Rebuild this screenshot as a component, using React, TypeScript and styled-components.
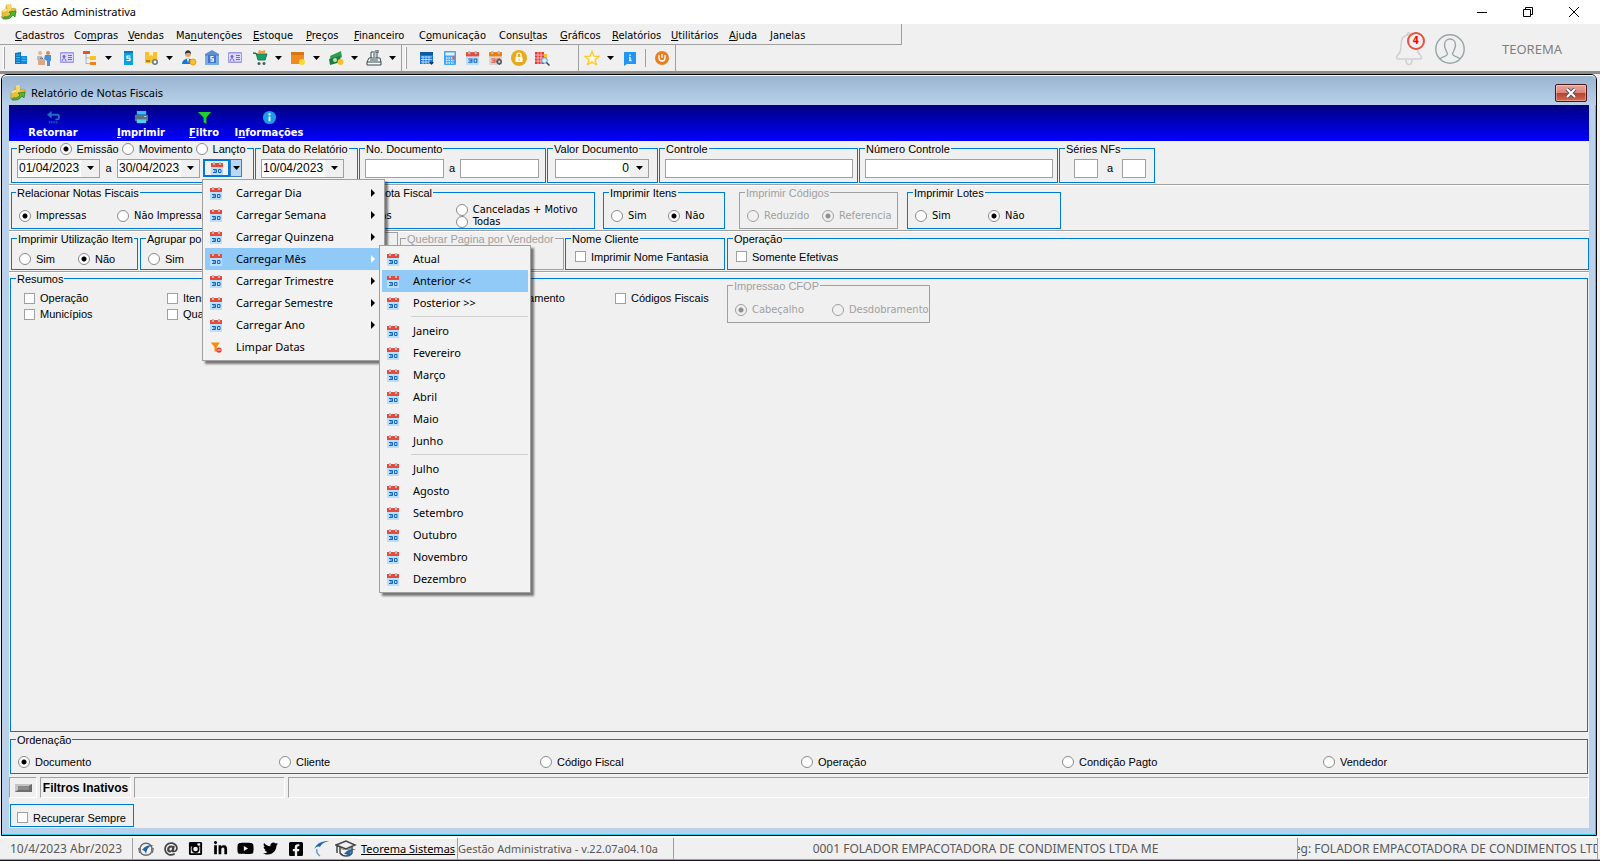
import React from 'react';
import styled, { createGlobalStyle, css } from 'styled-components';
import { FaAt, FaFacebookSquare, FaLinkedinIn, FaTwitter, FaYoutube } from 'react-icons/fa';

const UI = '"Noto Sans", "Open Sans", sans-serif';
const TAHOMA = '"DejaVu Sans Condensed", "DejaVu Sans", sans-serif';
const SYSTEM = '"Liberation Sans", Arial, sans-serif';

const BLUE = '#0078d7';
const GREY = '#a0a0a0';
const FACE = '#f0f0f0';

const GlobalStyle = createGlobalStyle`
  *, *::before, *::after { box-sizing: border-box; }
  body { margin: 0; background: ${FACE}; color: #000; font: 11px/14px ${SYSTEM}; overflow: hidden; }
  button, input { font: inherit; color: inherit; }
  button { background: none; border: 0; padding: 0; margin: 0; }
  svg { display: block; flex: none; }
`;

/* ---------- shell ---------- */

const Shell = styled.div`
  display: flex;
  flex-direction: column;
  min-height: 100vh;
  overflow: hidden;
`;

const TitleBar = styled.header`
  display: flex;
  align-items: center;
  height: 24px;
  padding: 0 3px 0 1px;
  background: #fff;
  font: 11px/16px ${UI};
`;

const TitleText = styled.h1`
  flex: 1;
  margin: 0 0 0 5px;
  font: inherit;
`;

const CaptionButton = styled.button`
  display: flex;
  align-items: center;
  justify-content: center;
  width: 46px;
  height: 20px;
`;

const CommandArea = styled.div`
  display: flex;
  height: 47px;
`;

const CommandBars = styled.div`
  flex: none;
`;

const MenuBar = styled.nav`
  display: flex;
  align-items: center;
  width: 902px;
  height: 21px;
  padding: 3px 0 0 15px;
  border-right: 1px solid ${GREY};
  border-bottom: 1px solid ${GREY};
  font: 11px/16px ${TAHOMA};
`;

const MenuEntry = styled.button<{ $width: number }>`
  width: ${(p) => p.$width}px;
  text-align: left;
  white-space: nowrap;
`;

const ToolBars = styled.div`
  display: flex;
  height: 26px;
`;

const ToolBand = styled.div<{ $width: number; $grip?: boolean }>`
  display: flex;
  align-items: center;
  width: ${(p) => p.$width}px;
  padding-left: ${(p) => (p.$grip ? 5 : 1)}px;
  border-right: 1px solid ${GREY};
`;

const Grip = styled.span`
  width: 2px;
  height: 22px;
  margin: 0 4px 0 -2px;
  background: #fff;
  border-right: 1px solid ${GREY};
`;

const ToolButton = styled.button`
  display: flex;
  align-items: center;
  justify-content: center;
  width: 23px;
  height: 24px;
`;

const ToolArrow = styled.button`
  display: flex;
  align-items: center;
  justify-content: center;
  width: 15px;
  height: 24px;
`;

const ToolDivider = styled.span<{ $visible?: boolean }>`
  width: ${(p) => (p.$visible ? 1 : 2)}px;
  height: 18px;
  background: ${(p) => (p.$visible ? GREY : 'transparent')};
  margin: 0 ${(p) => (p.$visible ? 4 : 0)}px;
`;

const Account = styled.div`
  display: flex;
  flex: 1;
  align-items: center;
  justify-content: flex-end;
  padding: 3px 38px 0 0;
  gap: 10px;
  color: #7f7f7f;
  font: 13px/18px ${UI};
`;

const AlertButton = styled.button`
  position: relative;
  width: 30px;
  height: 34px;
`;

const AlertCount = styled.span`
  position: absolute;
  top: 0;
  right: 0;
  width: 18px;
  height: 18px;
  border: 2px solid #e8503f;
  border-radius: 50%;
  background: ${FACE};
  color: #f00;
  font: bold 10px/14px ${TAHOMA};
  text-align: center;
`;

const AccountName = styled.span`
  margin-left: 27px;
`;

/* ---------- report window ---------- */

const Workspace = styled.main`
  display: flex;
  flex: 1;
  flex-direction: column;
  padding: 0 3px 0 1px;
  border-top: 3px solid #8d8d8d;
  background: ${FACE};
`;

const Window = styled.section`
  display: flex;
  flex: 1;
  flex-direction: column;
  border: 1px solid #000;
  border-radius: 6px 6px 0 0;
  background: #b9d1ea;
  box-shadow: inset -1px -1px 0 #2ad0e8, inset 0 1px 0 #fff;
`;

const WindowTitle = styled.header`
  display: flex;
  align-items: center;
  height: 30px;
  padding: 5px 9px 0 8px;
  border-top: 1px solid #fff;
  border-radius: 5px 5px 0 0;
  background: linear-gradient(#99b4d1, #b9d1ea);
  font: 11px/16px ${UI};
`;

const WindowName = styled.h2`
  flex: 1;
  margin: 0 0 0 5px;
  font: inherit;
`;

const CloseButton = styled.button`
  display: flex;
  align-items: center;
  justify-content: center;
  width: 32px;
  height: 18px;
  border: 1px solid #4a1418;
  border-radius: 2px;
  background: linear-gradient(#e9a69a 0, #dd8478 48%, #b8402a 50%, #cf6d55 100%);
  box-shadow: inset 0 0 0 1px rgba(255, 255, 255, 0.35);
`;

const WindowBody = styled.div`
  display: flex;
  flex: 1;
  flex-direction: column;
  margin: 0 7px 7px 7px;
  background: ${FACE};
`;

const ActionBar = styled.div`
  display: flex;
  height: 36px;
  padding-left: 16px;
  background: linear-gradient(#000080, #0000ff);
  color: #fff;
  font: bold 11px/14px ${TAHOMA};
`;

const Action = styled.button<{ $width: number; $gap: number }>`
  display: flex;
  flex-direction: column;
  align-items: center;
  justify-content: flex-end;
  gap: 1px;
  width: ${(p) => p.$width}px;
  margin-right: ${(p) => p.$gap}px;
  padding-bottom: 1px;
  white-space: nowrap;
`;

const FilterRow = styled.div`
  display: flex;
  gap: 1px;
  padding: 1px 0 1px 2px;
  border-bottom: 1px solid ${GREY};
  box-shadow: 0 1px 0 #fff;
`;

const Group = styled.fieldset<{ $width?: number; $height: number; $top?: number; $left?: number; $gap?: number; $before?: number }>`
  display: flex;
  flex: ${(p) => (p.$width ? 'none' : '1')};
  align-items: center;
  gap: ${(p) => p.$gap ?? 0}px;
  width: ${(p) => (p.$width ? `${p.$width}px` : 'auto')};
  min-width: 0;
  height: ${(p) => p.$height}px;
  margin: 0 0 0 ${(p) => p.$before ?? 0}px;
  padding: ${(p) => p.$top ?? 0}px 0 0 ${(p) => p.$left ?? 5}px;
  border: 1px solid ${BLUE};
  white-space: nowrap;

  &:disabled { border-color: ${GREY}; color: ${GREY}; }
`;

const Legend = styled.legend<{ $indent?: number }>`
  display: flex;
  align-items: center;
  height: 12px;
  margin-left: ${(p) => p.$indent ?? 0}px;
  padding: 2px 1px 0;
  line-height: 12px;
`;

const LegendChoices = styled.span`
  display: flex;
  gap: 3px;
  margin-left: 3px;
`;

const Choice = styled.label<{ $width?: number; $font?: string }>`
  display: flex;
  align-items: center;
  gap: 5px;
  width: ${(p) => (p.$width ? `${p.$width}px` : 'auto')};
  height: 12px;
  line-height: 12px;
  font-family: ${(p) => p.$font ?? 'inherit'};
`;

const Radio = styled.input.attrs({ type: 'radio' })`
  appearance: none;
  flex: none;
  width: 12px;
  height: 12px;
  margin: 0;
  border: 1px solid #8a8a8a;
  border-radius: 50%;
  background: #fff;

  &:checked { background: radial-gradient(circle, #000 0 2px, #fff 3px); }
  &:disabled { border-color: ${GREY}; background: ${FACE}; }
  &:disabled:checked { background: radial-gradient(circle, #8f8f8f 0 2px, ${FACE} 3px); }
`;

const CheckBox = styled.input.attrs({ type: 'checkbox' })`
  appearance: none;
  flex: none;
  width: 11px;
  height: 11px;
  margin: 0;
  border: 1px solid ${GREY};
  background: #fff;
`;

const fieldBox = css`
  height: 19px;
  border: 1px solid ${GREY};
  background: #fff;
`;

const TextField = styled.input.attrs({ type: 'text' })<{ $width: number }>`
  ${fieldBox}
  width: ${(p) => p.$width}px;
  padding: 0 2px;
`;

const ComboField = styled.span<{ $width: number }>`
  ${fieldBox}
  display: flex;
  width: ${(p) => p.$width}px;
  font-size: 12px;
`;

const ComboInput = styled.input.attrs({ type: 'text' })<{ $align?: string }>`
  flex: 1;
  min-width: 0;
  padding: 0 1px;
  border: 0;
  background: none;
  text-align: ${(p) => p.$align ?? 'left'};
`;

const ComboArrow = styled.button`
  display: flex;
  align-items: center;
  justify-content: center;
  width: 18px;
  background: ${FACE};
`;

const To = styled.span<{ $width: number }>`
  width: ${(p) => p.$width}px;
  text-align: center;
`;

const PeriodPicker = styled.div`
  position: relative;
  display: flex;
  width: 39px;
  height: 18px;
  margin-left: 3px;
`;

const PickerMain = styled.button`
  display: flex;
  align-items: center;
  justify-content: center;
  width: 27px;
  border: 2px solid ${BLUE};
  background: ${FACE};
`;

const PickerArrow = styled.button`
  display: flex;
  align-items: center;
  justify-content: center;
  width: 12px;
  border: 1px solid #3b7fb8;
  background: #b7d8f5;
`;

const menuPanel = css`
  position: absolute;
  z-index: 5;
  padding: 2px;
  border: 1px solid ${GREY};
  background: #f2f2f2;
  box-shadow: 3px 3px 2px rgba(0, 0, 0, 0.5);
  color: #000;
  font: 11px/16px ${UI};
`;

const PeriodMenu = styled.div`
  ${menuPanel}
  top: 20px;
  left: -1px;
  width: 183px;
`;

const SubMenu = styled.div`
  ${menuPanel}
  top: -3px;
  left: 174px;
  width: 152px;
`;

const MenuSlot = styled.div`
  position: relative;
`;

const MenuItem = styled.button<{ $active?: boolean }>`
  display: flex;
  align-items: center;
  gap: 14px;
  width: 100%;
  height: 22px;
  padding: 0 7px 0 5px;
  background: ${(p) => (p.$active ? '#91c9f7' : 'transparent')};
  text-align: left;
`;

const MenuLabel = styled.span`
  flex: 1;
  white-space: nowrap;
`;

const MenuRule = styled.hr`
  height: 1px;
  margin: 2px 0 3px 29px;
  border: 0;
  background: #d0d0d0;
`;

const Stack = styled.div`
  display: flex;
  flex-direction: column;
`;

const Summary = styled.fieldset`
  display: flex;
  flex: 1;
  align-items: flex-start;
  min-width: 0;
  min-height: 120px;
  margin: 0 1px 0 1px;
  padding: 0 0 0 6px;
  border: 1px solid ${BLUE};
  white-space: nowrap;
`;

const SummaryGrid = styled.div`
  display: grid;
  grid-template-columns: 143px 143px 133px 172px 112px;
  row-gap: 4px;
  padding: 8px 0 0 7px;
`;

const SummaryOption = styled.div`
  margin-top: -5px;
`;

const OrderGroup = styled.fieldset`
  display: grid;
  grid-template-columns: repeat(6, 1fr);
  min-width: 0;
  height: 41px;
  margin: 1px 1px 0 1px;
  padding: 11px 3px 0 7px;
  border: 1px solid ${BLUE};
`;

const FilterStatus = styled.div`
  display: flex;
  gap: 3px;
  height: 21px;
  margin-top: 3px;
`;

const SunkenPanel = styled.div<{ $width?: number }>`
  display: flex;
  flex: ${(p) => (p.$width ? 'none' : '1')};
  align-items: center;
  justify-content: center;
  width: ${(p) => (p.$width ? `${p.$width}px` : 'auto')};
  border: 1px solid;
  border-color: ${GREY} #fff #fff ${GREY};
  font-size: 12px;
  font-weight: bold;
  white-space: nowrap;
`;

const KeepBox = styled.div`
  display: flex;
  align-items: center;
  width: 124px;
  height: 23px;
  margin: 6px 0 1px 1px;
  padding: 4px 0 0 6px;
  border: 1px solid ${BLUE};
`;

/* ---------- status bar ---------- */

const StatusBar = styled.footer`
  display: flex;
  height: 25px;
  padding: 0 2px 0 0;
  border-top: 2px solid #fff;
  border-bottom: 1px solid #1c1420;
  box-shadow: inset 0 -1px 0 ${GREY};
  color: #595959;
  font: 12px/18px ${UI};
`;

const StatusCell = styled.div<{ $width?: number; $align?: string; $small?: boolean }>`
  display: flex;
  flex: ${(p) => (p.$width ? 'none' : '1')};
  align-items: center;
  justify-content: ${(p) => p.$align ?? 'flex-start'};
  width: ${(p) => (p.$width ? `${p.$width}px` : 'auto')};
  height: 21px;
  overflow: hidden;
  border-right: 1px solid ${GREY};
  font-size: ${(p) => (p.$small ? 11 : 12)}px;
  white-space: nowrap;
`;

const SocialLink = styled.a`
  display: flex;
  align-items: center;
  justify-content: center;
  width: 25px;
  color: #000;
`;

const SiteLink = styled.a`
  align-self: stretch;
  flex: 1;
  padding: 2px 0 0 3px;
  background: linear-gradient(#fff 1px, ${FACE} 1px);
  color: #000;
  font-size: 11px;
  text-decoration: underline;
`;

/* ---------- drawings ---------- */

const Caret = () => (
  <svg width="7" height="4" viewBox="0 0 7 4"><path d="M0 0h7L3.500 4z" fill="#000" /></svg>
);

const Calendar = ({ gear, size = 12 }: { gear?: boolean; size?: number }) => (
  <svg width={size} height={size + 1} viewBox="0 0 12 13">
    <rect y="5" width="12" height="8" fill={gear ? '#d6d6d6' : '#bbdefb'} />
    <rect y="1" width="12" height="4" fill={gear ? '#f57c00' : '#e74a3b'} />
    <rect x="2" width="2" height="3" fill="#b0bec5" />
    <rect x="8" width="2" height="3" fill="#b0bec5" />
    <path d="M2 7.500h3.500v3H2M3 9h2.500M7.500 7.500h2.500v3H7.500z" fill="none" stroke={gear ? '#e0533d' : '#1565c0'} />
    {gear && <><circle cx="9.500" cy="10" r="1.800" fill="#d6d6d6" stroke="#455a64" strokeWidth="1.400" /><path d="M9.500 7v1M9.500 12v1M6.500 10h1M11.500 10h.5" stroke="#455a64" /></>}
  </svg>
);

const AppLogo = () => (
  <svg width="16" height="16" viewBox="0 0 16 16">
    <path d="M5 1l4-1 1 1v4l3-1 2 1v4l-6 3-4 3-4-2V7l4-2z" fill="#e8bf3c" stroke="#b08a1e" strokeWidth="0.500" />
    <path d="M5 1l4-1 1 1-4 1zM1 7l4-2 2 1-5 2z" fill="#fdeea0" />
    <path d="M6 2l4-1v5L7 8z" fill="#f6d868" />
    <path d="M2 15c0-2 2-3 3-2 2 0 3-1 5-3L8 8l7-1-1 6-2-2c-2 3-4 4-7 4z" fill="#52b52e" stroke="#2c7a1c" strokeWidth="0.700" />
    <path d="M0 12l3 2-2 1z" fill="#8a939b" />
  </svg>
);

const icons: Record<string, React.ReactNode> = {
  building: <><path d="M2 3l6-1v4h6v8H2z" fill="#0277bd" /><path d="M8 6h6v8H8z" fill="#0b8ede" /><path d="M3 5h4M3 7.500h4M3 10h4M3 12.500h4M9 8h4M9 10.500h4" stroke="#4fb3f6" /></>,
  people: <><circle cx="4" cy="3" r="2" fill="#e8b48a" /><circle cx="12" cy="3" r="2" fill="#c98f62" /><path d="M1 6h5l1 4H1z" fill="#b0bec5" /><path d="M9 5h6v6h-1v5h-3v-5L8 9z" fill="#4a90d9" /><rect x="2" y="9" width="7" height="6" fill="#d8a989" /><path d="M4.500 9V8h2v1" stroke="#8d6e63" fill="none" /></>,
  card: <><rect x="1" y="2" width="14" height="11" rx="1" fill="#9f99e0" /><rect x="2" y="3.500" width="12" height="8" fill="#dedbfa" /><circle cx="5" cy="6.500" r="1.500" fill="#6f66cf" /><path d="M3 11c0-3 4-3 4 0M9 5.500h4M9 7.500h4M9 9.500h4" stroke="#6f66cf" fill="none" /></>,
  tree: <><rect x="1" y="1" width="7" height="3" fill="#e8502e" /><rect x="8" y="6" width="6" height="4" fill="#f5c518" /><rect x="8" y="12" width="6" height="3" fill="#f08020" /><path d="M4 4v9.500h4M4 8h4" fill="none" stroke="#78909c" strokeWidth="0.600" /></>,
  tag: <><rect x="4" y="1" width="9" height="14" fill="#0aa3e0" /><rect x="4" y="1" width="9" height="2" fill="#0679b8" /><path d="M10.500 6H7v2.200h3v2.300H6.500" fill="none" stroke="#fff" strokeWidth="1.200" /></>,
  boxgear: <><rect x="2" y="2" width="12" height="11" fill="#fbc02d" /><path d="M6 2h4v4L8 5 6 6z" fill="#fff3c4" /><circle cx="12" cy="12" r="2.200" fill="#fff" stroke="#607d8b" strokeWidth="1.600" /><path d="M3 11h4" stroke="#5d4037" /></>,
  person: <><circle cx="7" cy="4" r="3" fill="#e3a06b" /><path d="M4 4c0-5 6-5 6 0-2-2-4-1-6 0z" fill="#263238" /><path d="M1 14c0-7 12-7 12 0z" fill="#1976d2" /><path d="M6 9l1 4 1-4z" fill="#fff" /><circle cx="12" cy="12" r="3" fill="#fbc02d" stroke="#f39c12" /></>,
  bank: <><path d="M8 0l7 4v2H1V4z" fill="#5c8fd6" /><path d="M1 6h3v7H1zM12 6h3v7h-3zM1 13h14v2H1z" fill="#7fa9e6" /><rect x="4" y="5" width="8" height="8" fill="#3f78c9" /><path d="M9.500 6.500H7v2.300h2.300v2.400H6.500" fill="none" stroke="#fff" strokeWidth="1.200" /></>,
  cart: <><path d="M1 3h3l2 7h7l2-6H5z" fill="#1aa06d" stroke="#117a52" /><path d="M6 3l1-3 3 1 3-1v3z" fill="#f39c3d" /><circle cx="7" cy="13.500" r="1.500" fill="#455a64" /><circle cx="12" cy="13.500" r="1.500" fill="#455a64" /></>,
  parcel: <><rect x="1" y="2" width="13" height="12" fill="#ef8a1e" /><rect x="1" y="2" width="13" height="3" fill="#d97412" /><circle cx="12" cy="12" r="3" fill="#fdd835" /></>,
  money: <><path d="M2 6l11-5 1 6-11 5z" fill="#2e9e4f" /><path d="M1 9l11-3 1 6-11 3z" fill="#1f7d3b" /><circle cx="7" cy="10" r="2" fill="#b7e4c0" /><circle cx="12.500" cy="12" r="3" fill="#fbc02d" /></>,
  register: <><path d="M5 8V2h6v6M1 12l2-4h11l1 4v3H1z" fill="#f7f9fa" stroke="#37474f" /><path d="M7 4h2.500M7 6h2.500M4 10h8M1 12h14" stroke="#37474f" /><path d="M9 0h3v3" fill="none" stroke="#37474f" /></>,
  calendar: <><rect x="1" y="2" width="13" height="12" fill="#1976d2" /><rect x="1" y="2" width="13" height="3" fill="#0d5aa7" /><path d="M2 7h11M2 9.500h11M2 12h8M4 6v8M7 6v8M10 6v8" stroke="#d6ebff" strokeWidth="0.800" /><path d="M10 12h5l-2.500 3z" fill="#0d3d70" /></>,
  calc: <><rect x="2" y="1" width="12" height="14" rx="1" fill="#42a5f5" /><rect x="3.500" y="2.500" width="9" height="3" fill="#e3f2fd" /><path d="M4 8h8M4 10.500h8M4 13h8" stroke="#e3f2fd" strokeWidth="1.500" strokeDasharray="1.500 1" /><rect x="10.500" y="6" width="2" height="3" fill="#ef5350" /></>,
  lock: <><circle cx="8" cy="8" r="8" fill="#e6ab1c" /><rect x="4.500" y="7" width="7" height="5" fill="#fff" /><path d="M6 7V5c0-2.500 4-2.500 4 0v2" fill="none" stroke="#fff" strokeWidth="1.300" /><path d="M8 8.500v2" stroke="#e6ab1c" /></>,
  search: <><rect x="1" y="2" width="9" height="12" fill="#e53935" /><path d="M1 5h9M1 8h9M1 11h9M4 2v12M7 2v12" stroke="#ffcdd2" strokeWidth="0.800" /><rect x="10" y="4" width="3" height="8" fill="#fbc02d" /><circle cx="10.500" cy="10.500" r="2.800" fill="#d6ecfb" stroke="#5c9bd1" /><path d="M12.500 12.500l3 3" stroke="#37474f" strokeWidth="1.500" /></>,
  star: <path d="M8 1.500l1.900 4.700 5 .3-3.900 3.200 1.300 4.900L8 11.900l-4.300 2.700L5 9.700 1.100 6.500l5-.3z" fill="#fffbe8" stroke="#ffca28" strokeWidth="1.400" />,
  info: <><path d="M2 2h12v12H5l-3 2z" fill="#2196f3" /><path d="M8 4.500v1.500M8 7v4M7 10.500h2.500M7 7.500h1" stroke="#fff" strokeWidth="1.400" /></>,
  power: <><circle cx="8" cy="8" r="7" fill="#e67e22" /><path d="M5 5v3c0 4 6 4 6 0V5M8 4v4" fill="none" stroke="#fff" strokeWidth="1.300" /></>,
  back: <><path d="M4 5h8c2.500 0 2.500 5 0 5h-2" fill="none" stroke="#1f6fc4" strokeWidth="2" /><path d="M1 5l5-4v8z" fill="#1f6fc4" /><path d="M3 13h10" stroke="#1f6fc4" strokeWidth="2" strokeDasharray="1 1" /></>,
  printer: <><rect x="3" y="1" width="10" height="4" fill="#35c4ee" /><rect x="1" y="5" width="14" height="7" rx="1" fill="#5f7280" /><rect x="3" y="10" width="10" height="4" fill="#4dd0f5" /><rect x="11" y="6.500" width="2" height="1" fill="#b2ebf2" /></>,
  funnel: <path d="M1 2h14l-5 6v7l-3-2V8z" fill="#1fd02a" />,
  about: <><circle cx="8" cy="8" r="7" fill="#1e9be8" /><path d="M8 3.500v2M8 7v5" stroke="#fff" strokeWidth="2" /></>,
  clear: <><path d="M1 2h12L9 8v6H6V8z" fill="#fb8c00" /><circle cx="12" cy="12" r="3.500" fill="#e53935" /><path d="M10 12h4" stroke="#fff" strokeWidth="1.300" /></>,
  headset: <><path d="M2 9c-1-9 13-9 12 0-1 7-11 7-12 0z" fill="none" stroke="#666" strokeWidth="1.400" /><path d="M0 7h3v5H1zM13 7h3l-1 5h-2z" fill="#777" /><path d="M4 9c3-4 6-5 12-5-5 1-7 3-8 9-1-3-2-4-4-4z" fill="#1c66a8" /></>,
  instagram: <><rect x="1" y="1" width="14" height="14" rx="1.500" fill="#000" /><path d="M3 6h10v7H3z" fill={FACE} /><rect x="10" y="2.500" width="3" height="2.500" fill={FACE} /><circle cx="8" cy="8.500" r="4.200" fill="#000" /><circle cx="8" cy="8.500" r="2.500" fill={FACE} /></>,
  feather: <><path d="M1 8C4 2 9 0 16 0 11 1 8 3 7 6 5 5 3 6 1 8z" fill="#1c66a8" /><path d="M4 8c-1 3 0 5 3 7" fill="none" stroke="#5b9bd0" strokeWidth="1.400" /></>,
};

const Icon = ({ name, size = 16 }: { name: string; size?: number }) =>
  name === 'cal30' ? <Calendar size={13} /> : name === 'calgear' ? <Calendar gear size={13} /> : (
    <svg width={size} height={size} viewBox="0 0 16 16">{icons[name]}</svg>
  );

const GraduateIcon = () => (
  <svg width="22" height="18" viewBox="0 0 22 18">
    <path d="M1 5l10-4 9 4-9 4zM5 7v6c3 4 9 4 12 0V7M2 6v7" fill="none" stroke="#444" strokeWidth="1.500" />
    <path d="M5 8c4 2 8 2 12 0" fill="none" stroke="#777" />
    <path d="M9 14c3-4 6-5 12-5-4 1-6 3-7 8-1-2-2-3-5-3z" fill="#1c66a8" />
  </svg>
);

/* ---------- data ---------- */

const menus: [string, string, string, number][] = [
  ['', 'C', 'adastros', 59], ['Co', 'm', 'pras', 54], ['', 'V', 'endas', 48], ['Ma', 'n', 'utenções', 77],
  ['', 'E', 'stoque', 53], ['', 'P', 'reços', 48], ['', 'F', 'inanceiro', 65], ['C', 'o', 'municação', 80],
  ['Consu', 'l', 'tas', 61], ['', 'G', 'ráficos', 52], ['', 'R', 'elatórios', 59], ['', 'U', 'tilitários', 58],
  ['', 'A', 'juda', 41], ['', 'J', 'anelas', 50],
];

const mainTools = ['building', 'people', 'card', 'tree', '>', 'tag', 'boxgear', '>', 'person', 'bank', 'card', '|', 'cart', '>', 'parcel', '>', 'money', '>', 'register', '>'];
const utilityTools = ['calendar', 'calc', 'cal30', 'calgear', 'lock', 'search'];
const quickTools = ['star', '>', 'info', '||', 'power'];

const months: (string | null)[] = [
  'Atual', 'Anterior <<', 'Posterior >>', null,
  'Janeiro', 'Fevereiro', 'Março', 'Abril', 'Maio', 'Junho', null,
  'Julho', 'Agosto', 'Setembro', 'Outubro', 'Novembro', 'Dezembro',
];

/* ---------- parts ---------- */

const Tools = ({ items }: { items: string[] }) => (
  <>
    {items.map((item, i) =>
      item === '>' ? <ToolArrow key={i} aria-label="Mais opções"><Caret /></ToolArrow>
        : item === '|' ? <ToolDivider key={i} />
        : item === '||' ? <ToolDivider key={i} $visible />
        : <ToolButton key={i} aria-label={item}><Icon name={item} /></ToolButton>,
    )}
  </>
);

const RadioChoice = ({ name, label, checked, width, font }: { name: string; label: string; checked?: boolean; width?: number; font?: string }) => (
  <Choice $width={width} $font={font}><Radio name={name} defaultChecked={checked} />{label}</Choice>
);

const CheckChoice = ({ label, font }: { label: string; font?: string }) => (
  <Choice $font={font}><CheckBox />{label}</Choice>
);

const Combo = ({ label, value, width, align }: { label: string; value: string; width: number; align?: string }) => (
  <ComboField $width={width}>
    <ComboInput aria-label={label} defaultValue={value} $align={align} />
    <ComboArrow aria-label={`Abrir ${label}`}><Caret /></ComboArrow>
  </ComboField>
);

const MonthMenu = () => (
  <SubMenu role="menu">
    {months.map((m, i) => m === null ? <MenuRule key={i} /> : (
      <MenuItem key={m} role="menuitem" $active={m.startsWith('Anterior')}><Calendar /><MenuLabel>{m}</MenuLabel></MenuItem>
    ))}
  </SubMenu>
);

const LoadMenu = () => (
  <PeriodMenu role="menu">
    {['Dia', 'Semana', 'Quinzena', 'Mês', 'Trimestre', 'Semestre', 'Ano'].map((span) => {
      const open = span === 'Mês';
      return (
        <MenuSlot key={span}>
          <MenuItem role="menuitem" $active={open}>
            <Calendar />
            <MenuLabel>Carregar {span}</MenuLabel>
            <svg width="4" height="8" viewBox="0 0 4 8"><path d="M0 0l4 4-4 4z" fill={open ? '#fff' : '#000'} /></svg>
          </MenuItem>
          {open && <MonthMenu />}
        </MenuSlot>
      );
    })}
    <MenuItem role="menuitem"><Icon name="clear" size={12} /><MenuLabel>Limpar Datas</MenuLabel></MenuItem>
  </PeriodMenu>
);

export default function App() {
  return (
    <Shell>
      <GlobalStyle />
      <TitleBar>
        <AppLogo />
        <TitleText>Gestão Administrativa</TitleText>
        <CaptionButton aria-label="Minimizar"><svg width="10" height="10"><path d="M0 5.500h10" stroke="#000" /></svg></CaptionButton>
        <CaptionButton aria-label="Restaurar"><svg width="10" height="10"><path d="M.5 2.500h7v7h-7zM2.500 2.500v-2h7v7h-2" fill="none" stroke="#000" /></svg></CaptionButton>
        <CaptionButton aria-label="Fechar"><svg width="10" height="10"><path d="M0 0l10 10M10 0L0 10" stroke="#000" /></svg></CaptionButton>
      </TitleBar>

      <CommandArea>
        <CommandBars>
          <MenuBar>
            {menus.map(([before, key, after, width]) => (
              <MenuEntry key={before + key + after} $width={width}>{before}<u>{key}</u>{after}</MenuEntry>
            ))}
          </MenuBar>
          <ToolBars>
            <ToolBand $width={402} $grip><Grip /><Tools items={mainTools} /></ToolBand>
            <ToolBand $width={177} $grip><Grip /><ToolDivider /><ToolDivider /><Tools items={utilityTools} /></ToolBand>
            <ToolBand $width={97}><Tools items={quickTools} /></ToolBand>
          </ToolBars>
        </CommandBars>
        <Account>
          <AlertButton aria-label="4 notificações">
            <svg width="28" height="34" viewBox="0 0 28 34" fill="none" stroke="#d0d0d0" strokeWidth="1.600">
              <path d="M14 3c-6 0-8 5-8 10 0 6-1 8-4 11-1 2 0 3 1 3h22c1 0 2-1 1-3-3-3-4-5-4-11 0-5-2-10-8-10zM11 28c0 6 6 6 6 0M12 3c0-3 4-3 4 0" />
            </svg>
            <AlertCount>4</AlertCount>
          </AlertButton>
          <svg width="30" height="30" viewBox="0 0 30 30" fill="none" stroke="#95a5a6" strokeWidth="1.400">
            <circle cx="15" cy="15" r="14.200" />
            <path d="M5 25c2-3 7-2 7.500-5 0-2-3-4-3-9 0-8 11-8 11 0 0 5-3 7-3 9 .5 3 5.500 2 7.500 5" />
          </svg>
          <AccountName>TEOREMA</AccountName>
        </Account>
      </CommandArea>

      <Workspace>
        <Window>
          <WindowTitle>
            <AppLogo />
            <WindowName>Relatório de Notas Fiscais</WindowName>
            <CloseButton aria-label="Fechar relatório">
              <svg width="12" height="10" viewBox="0 0 12 10"><path d="M2 1l8 8M10 1L2 9" stroke="#4b5563" strokeWidth="4" /><path d="M2 1l8 8M10 1L2 9" stroke="#fff" strokeWidth="2" /></svg>
            </CloseButton>
          </WindowTitle>
          <WindowBody>
            <ActionBar>
              <Action $width={56} $gap={32}><Icon name="back" size={15} />Retornar</Action>
              <Action $width={56} $gap={18}><Icon name="printer" size={15} /><span><u>I</u>mprimir</span></Action>
              <Action $width={34} $gap={11}><Icon name="funnel" size={15} /><span><u>F</u>iltro</span></Action>
              <Action $width={74} $gap={0}><Icon name="about" size={15} /><span>I<u>n</u>formações</span></Action>
            </ActionBar>

            <FilterRow>
              <Group $width={243} $height={41}>
                <Legend>
                  Período
                  <LegendChoices>
                    <RadioChoice name="periodo" label="Emissão" checked />
                    <RadioChoice name="periodo" label="Movimento" />
                    <RadioChoice name="periodo" label="Lançto" />
                  </LegendChoices>
                </Legend>
                <Combo label="Data inicial" value="01/04/2023" width={83} />
                <To $width={17}>a</To>
                <Combo label="Data final" value="30/04/2023" width={83} />
                <PeriodPicker>
                  <PickerMain aria-label="Carregar período"><Calendar /></PickerMain>
                  <PickerArrow aria-label="Abrir períodos"><Caret /></PickerArrow>
                  <LoadMenu />
                </PeriodPicker>
              </Group>
              <Group $width={103} $height={41}>
                <Legend>Data do Relatório</Legend>
                <Combo label="Data do Relatório" value="10/04/2023" width={83} />
              </Group>
              <Group $width={187} $height={41}>
                <Legend>No. Documento</Legend>
                <TextField aria-label="Documento inicial" $width={79} />
                <To $width={16}>a</To>
                <TextField aria-label="Documento final" $width={79} />
              </Group>
              <Group $width={111} $height={41} $left={7}>
                <Legend $indent={-2}>Valor Documento</Legend>
                <Combo label="Valor Documento" value="0" width={94} align="right" />
              </Group>
              <Group $width={199} $height={41}>
                <Legend>Controle</Legend>
                <TextField aria-label="Controle" $width={188} />
              </Group>
              <Group $width={199} $height={41}>
                <Legend>Número Controle</Legend>
                <TextField aria-label="Número Controle" $width={188} />
              </Group>
              <Group $width={96} $height={41} $left={14}>
                <Legend $indent={-9}>Séries NFs</Legend>
                <TextField aria-label="Série inicial" $width={24} />
                <To $width={24}>a</To>
                <TextField aria-label="Série final" $width={24} />
              </Group>
            </FilterRow>

            <FilterRow>
              <Group $width={246} $height={43} $top={6} $left={7}>
                <Legend $indent={-3}>Relacionar Notas Fiscais</Legend>
                <RadioChoice name="relacionar" label="Impressas" checked width={98} font={TAHOMA} />
                <RadioChoice name="relacionar" label="Não Impressas" font={TAHOMA} />
              </Group>
              <Group $width={337} $height={43} $top={5} $left={73} $gap={64}>
                <Legend $indent={44}>Nota Fiscal</Legend>
                <RadioChoice name="nota" label="Emitidas" font={TAHOMA} />
                <Stack>
                  <RadioChoice name="nota" label="Canceladas + Motivo" font={TAHOMA} />
                  <RadioChoice name="nota" label="Todas" font={TAHOMA} />
                </Stack>
              </Group>
              <Group $width={122} $height={43} $top={6} $left={7} $before={7}>
                <Legend $indent={-2}>Imprimir Itens</Legend>
                <RadioChoice name="itens" label="Sim" width={57} font={TAHOMA} />
                <RadioChoice name="itens" label="Não" checked font={TAHOMA} />
              </Group>
              <Group $width={159} $height={43} $top={6} $left={7} $before={13} disabled>
                <Legend $indent={-2}>Imprimir Códigos</Legend>
                <RadioChoice name="codigos" label="Reduzido" width={75} font={TAHOMA} />
                <RadioChoice name="codigos" label="Referencia" checked font={TAHOMA} />
              </Group>
              <Group $width={154} $height={43} $top={6} $left={7} $before={8}>
                <Legend $indent={-2}>Imprimir Lotes</Legend>
                <RadioChoice name="lotes" label="Sim" width={73} font={TAHOMA} />
                <RadioChoice name="lotes" label="Não" checked font={TAHOMA} />
              </Group>
            </FilterRow>

            <FilterRow>
              <Group $width={127} $height={38} $top={4} $left={7}>
                <Legend $indent={-2}>Imprimir Utilização Item</Legend>
                <RadioChoice name="utilizacao" label="Sim" width={59} />
                <RadioChoice name="utilizacao" label="Não" checked />
              </Group>
              <Group $width={126} $height={38} $top={4} $left={7} $before={1}>
                <Legend $indent={-2}>Agrupar por</Legend>
                <RadioChoice name="agrupar" label="Sim" />
              </Group>
              <Group $width={130} $height={38} $before={1} disabled />
              <Group $width={164} $height={38} $before={1} disabled>
                <Legend>Quebrar Pagina por Vendedor</Legend>
              </Group>
              <Group $width={160} $height={38} $left={9}>
                <Legend $indent={-4}>Nome Cliente</Legend>
                <CheckChoice label="Imprimir Nome Fantasia" />
              </Group>
              <Group $height={38} $left={8} $before={1}>
                <Legend $indent={-3}>Operação</Legend>
                <CheckChoice label="Somente Efetivas" />
              </Group>
            </FilterRow>

            <Summary>
              <Legend $indent={-1}>Resumos</Legend>
              <SummaryGrid>
                <CheckChoice label="Operação" />
                <CheckChoice label="Itens" />
                <span />
                <CheckChoice label="Condição Pagamento" />
                <CheckChoice label="Códigos Fiscais" />
                <CheckChoice label="Municípios" />
                <CheckChoice label="Quantidades" />
              </SummaryGrid>
              <SummaryOption>
                <Group $width={203} $height={44} $top={6} $left={7} disabled>
                  <Legend $indent={-2}>Impressao CFOP</Legend>
                  <RadioChoice name="cfop" label="Cabeçalho" checked width={97} font={TAHOMA} />
                  <RadioChoice name="cfop" label="Desdobramento" font={TAHOMA} />
                </Group>
              </SummaryOption>
            </Summary>

            <OrderGroup>
              <Legend $indent={-2}>Ordenação</Legend>
              {['Documento', 'Cliente', 'Código Fiscal', 'Operação', 'Condição Pagto', 'Vendedor'].map((label, i) => (
                <RadioChoice key={label} name="ordenacao" label={label} checked={i === 0} />
              ))}
            </OrderGroup>

            <FilterStatus>
              <SunkenPanel $width={28}>
                <svg width="17" height="8"><path d="M0 0h17v8H0z" fill="#8a8a8a" /><path d="M0 8V0h17l-3 2H3v4z" fill="#c4c4c4" /><path d="M0 8h17V0l-3 2v4H3z" fill="#6d6d6d" /></svg>
              </SunkenPanel>
              <SunkenPanel $width={91}>Filtros Inativos</SunkenPanel>
              <SunkenPanel $width={151} />
              <SunkenPanel />
            </FilterStatus>

            <KeepBox><CheckChoice label="Recuperar Sempre" /></KeepBox>
          </WindowBody>
        </Window>
      </Workspace>

      <StatusBar>
        <StatusCell $width={133} $align="center">10/4/2023 Abr/2023</StatusCell>
        <StatusCell $width={325}>
          <SocialLink href="#suporte" aria-label="Suporte"><Icon name="headset" /></SocialLink>
          <SocialLink href="#email" aria-label="E-mail"><FaAt size={14} color="#444" /></SocialLink>
          <SocialLink href="#instagram" aria-label="Instagram"><Icon name="instagram" size={15} /></SocialLink>
          <SocialLink href="#linkedin" aria-label="LinkedIn"><FaLinkedinIn size={15} /></SocialLink>
          <SocialLink href="#youtube" aria-label="YouTube"><FaYoutube size={17} /></SocialLink>
          <SocialLink href="#twitter" aria-label="Twitter"><FaTwitter size={15} /></SocialLink>
          <SocialLink href="#facebook" aria-label="Facebook"><FaFacebookSquare size={16} /></SocialLink>
          <SocialLink href="#blog" aria-label="Blog"><Icon name="feather" /></SocialLink>
          <SocialLink href="#ead" aria-label="EAD"><GraduateIcon /></SocialLink>
          <SiteLink href="#teorema">Teorema Sistemas</SiteLink>
        </StatusCell>
        <StatusCell $width={216} $small>Gestão Administrativa - v.22.07a04.10a</StatusCell>
        <StatusCell $align="center">0001 FOLADOR EMPACOTADORA DE CONDIMENTOS LTDA ME</StatusCell>
        <StatusCell $width={300} $align="center">Reg: FOLADOR EMPACOTADORA DE CONDIMENTOS LTDA</StatusCell>
      </StatusBar>
    </Shell>
  );
}
